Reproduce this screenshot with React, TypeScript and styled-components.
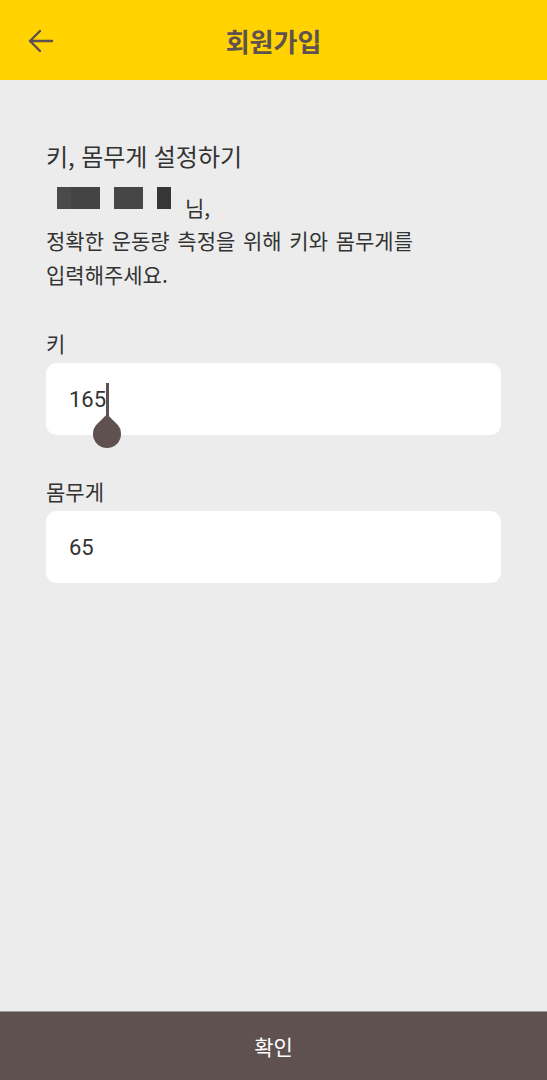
import styled, { createGlobalStyle } from 'styled-components';

const GlobalStyle = createGlobalStyle`
  body {
    margin: 0;
    background: #ececec;
    font-family: 'Noto Sans CJK KR', 'Noto Sans', sans-serif;
  }
`;

function App() {
  return (
    <Page>
      <GlobalStyle />
      <Header>
        <BackButton aria-label="back">
          <svg width="26" height="24" viewBox="0 0 26 24" fill="none">
            <path
              d="M2 12H24M12 2L2 12L12 22"
              stroke="#5e5150"
              strokeWidth="2.4"
              strokeLinecap="round"
              strokeLinejoin="round"
            />
          </svg>
        </BackButton>
        <Title>회원가입</Title>
      </Header>

      <Content>
        <Heading>키, 몸무게 설정하기</Heading>
        <NameRow>
          <Masked>
            <Block w={14} shade="#4a4a4a" />
            <Block w={29} shade="#444" />
            <Gap w={14} />
            <Block w={29} shade="#464646" />
            <Gap w={14} />
            <Block w={14} shade="#363636" />
          </Masked>
          <NameSuffix>님,</NameSuffix>
        </NameRow>
        <Desc>
          정확한 운동량 측정을 위해 키와 몸무게를
          <br />
          입력해주세요.
        </Desc>

        <Field>
          <Label>키</Label>
          <InputBox>
            <Value>165</Value>
            <Caret>
              <CaretHandle />
            </Caret>
          </InputBox>
        </Field>

        <Field>
          <Label>몸무게</Label>
          <InputBox>
            <Value>65</Value>
          </InputBox>
        </Field>
      </Content>

      <Confirm>확인</Confirm>
    </Page>
  );
}

export default App;

const Page = styled.div`
  min-height: 100vh;
  display: flex;
  flex-direction: column;
  background: #ececec;
`;

const Header = styled.header`
  height: 80px;
  background: #ffd200;
  display: flex;
  align-items: center;
  justify-content: center;
  position: relative;
`;

const BackButton = styled.div`
  position: absolute;
  left: 28px;
  top: 29px;
  display: flex;
`;

const Title = styled.h1`
  margin: 0;
  font-size: 26px;
  font-weight: 700;
  color: #5e5150;
`;

const Content = styled.main`
  flex: 1;
  padding: 60px 46px 0;
  display: flex;
  flex-direction: column;
`;

const Heading = styled.h2`
  margin: 0;
  font-size: 24px;
  font-weight: 400;
  line-height: 32px;
  word-spacing: 1px;
  color: #333;
`;

const NameRow = styled.div`
  display: flex;
  align-items: flex-start;
  margin-top: 15px;
  padding-left: 11px;
`;

const Masked = styled.div`
  display: flex;
  height: 22px;
`;

const Block = styled.span<{ w: number; shade: string }>`
  width: ${(p) => p.w}px;
  background: ${(p) => p.shade};
`;

const Gap = styled.span<{ w: number }>`
  width: ${(p) => p.w}px;
`;

const NameSuffix = styled.span`
  margin: 6px 0 0 14px;
  font-size: 21px;
  line-height: 28px;
  color: #333;
`;

const Desc = styled.p`
  margin: 2px 0 0;
  font-size: 21px;
  line-height: 34px;
  word-spacing: 3px;
  color: #333;
`;

const Field = styled.div`
  display: flex;
  flex-direction: column;
  margin-top: 37px;

  & + & {
    margin-top: 41px;
  }
`;

const Label = styled.div`
  font-size: 21px;
  line-height: 30px;
  color: #333;
  margin-bottom: 5px;
`;

const InputBox = styled.div`
  height: 72px;
  background: #fff;
  border-radius: 11px;
  display: flex;
  align-items: center;
  padding: 0 23px;
`;

const Value = styled.span`
  font-family: Roboto, 'Noto Sans', sans-serif;
  font-size: 22px;
  color: #333;
`;

const Caret = styled.span`
  position: relative;
  width: 2.5px;
  height: 33px;
  background: #5e5150;
`;

const CaretHandle = styled.span`
  position: absolute;
  left: -12.75px;
  top: 37px;
  width: 28px;
  height: 28px;
  background: #5e5150;
  border-radius: 0 50% 50% 50%;
  transform: rotate(45deg);
`;

const Confirm = styled.button`
  height: 69px;
  border: 0;
  border-top: 1px solid #a09898;
  background: #5e5150;
  color: #fff;
  font-family: 'Noto Sans CJK KR', 'Noto Sans', sans-serif;
  font-size: 21px;
  width: 100%;
`;
